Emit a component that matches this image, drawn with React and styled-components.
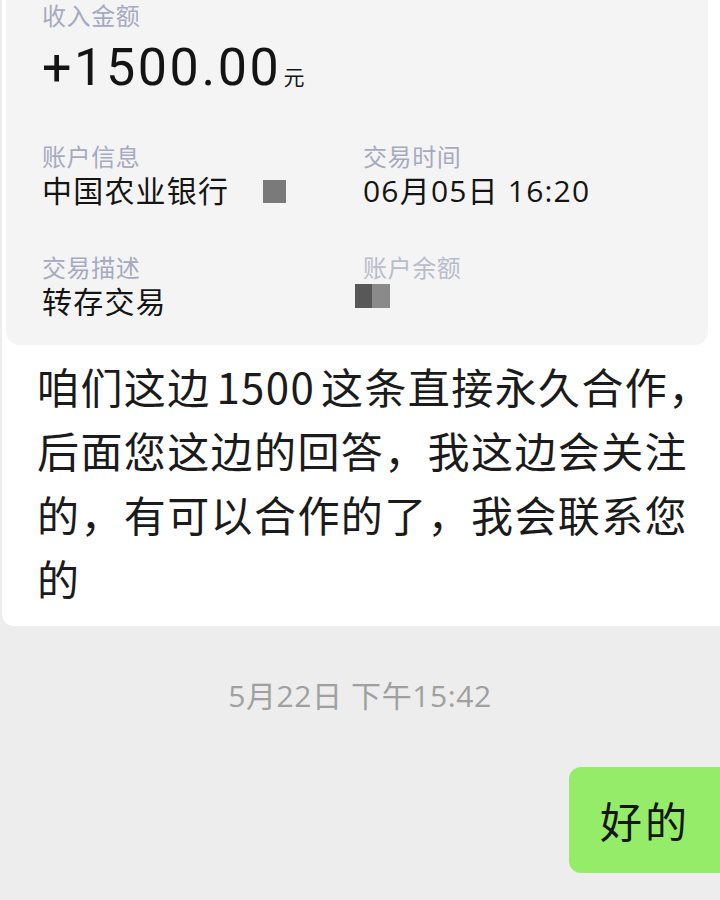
import React from "react";
import styled, { createGlobalStyle } from "styled-components";

const Global = createGlobalStyle`
  html, body { margin: 0; padding: 0; background: #ededed; }
  body { font-family: "Noto Sans CJK SC", "Noto Sans", sans-serif; }
`;

const Page = styled.div`
  width: 720px;
  height: 900px;
  overflow: hidden;
  display: flex;
  flex-direction: column;
  background: #ededed;
`;

const Bubble = styled.div`
  background: #ffffff;
  margin-left: 2px;
  border-radius: 0 0 0 12px;
  padding-bottom: 16px;
  display: flex;
  flex-direction: column;
`;

const Card = styled.div`
  background: #f4f4f4;
  margin: 0 12px 0 4px;
  border-radius: 0 0 14px 14px;
  padding: 0 0 25px 36px;
  display: flex;
  flex-direction: column;
`;

const Label = styled.div`
  font-size: 24px;
  line-height: 30px;
  letter-spacing: 0.6px;
  color: ${(p) => (p.$faint ? "#b9bccb" : "#a6aac0")};
  white-space: nowrap;
`;

const Amount = styled.div`
  margin-top: 7px;
  font-family: Roboto, "Noto Sans", sans-serif;
  font-size: 52px;
  line-height: 62px;
  font-weight: 400;
  letter-spacing: 2.6px;
  color: #141414;
  display: flex;
  align-items: baseline;
`;

const Unit = styled.span`
  font-family: "Noto Sans CJK SC", sans-serif;
  font-size: 21px;
  font-weight: 400;
  margin-left: 2px;
  letter-spacing: 0;
`;

const InfoGrid = styled.div`
  margin-top: 34px;
  display: grid;
  grid-template-columns: 321px 1fr;
  row-gap: 43px;
`;

const Field = styled.div`
  display: flex;
  flex-direction: column;
  gap: 2px;
`;

const Value = styled.div`
  font-family: "Open Sans", "Noto Sans CJK SC", sans-serif;
  font-size: 30px;
  line-height: 36px;
  letter-spacing: 1.2px;
  color: #141414;
  white-space: nowrap;
  display: flex;
  align-items: center;
`;

const Mosaic = styled.span`
  display: inline-block;
  width: ${(p) => p.$w}px;
  height: ${(p) => p.$h}px;
  background: ${(p) => p.$c};
  margin-left: ${(p) => p.$ml || 0}px;
`;

const Message = styled.div`
  padding: 9px 0 0 35px;
  font-size: 42px;
  line-height: 64px;
  letter-spacing: 1.4px;
  word-spacing: -5px;
  font-weight: 400;
  color: #1b1b1b;
  white-space: pre;
`;

const Time = styled.div`
  margin-top: 50px;
  text-align: center;
  font-family: "Open Sans", "Noto Sans CJK SC", sans-serif;
  font-size: 30px;
  line-height: 40px;
  letter-spacing: 0.6px;
  color: #a0a0a0;
`;

const Row = styled.div`
  margin-top: 51px;
  display: flex;
  justify-content: flex-end;
`;

const GreenBubble = styled.div`
  background: #95ec69;
  border-radius: 12px 0 0 12px;
  padding: 32px 30px 32px 31px;
  font-size: 42px;
  line-height: 42px;
  letter-spacing: 3px;
  color: #161616;
`;

export default function App() {
  return (
    <Page>
      <Global />
      <Bubble>
        <Card>
          <Label>收入金额</Label>
          <Amount>
            +1500.00<Unit>元</Unit>
          </Amount>
          <InfoGrid>
            <Field>
              <Label>账户信息</Label>
              <Value>
                中国农业银行
                <Mosaic $w={23} $h={23} $c="#7a7a7a" $ml={34} />
              </Value>
            </Field>
            <Field>
              <Label>交易时间</Label>
              <Value>06月05日 16:20</Value>
            </Field>
            <Field>
              <Label>交易描述</Label>
              <Value>转存交易</Value>
            </Field>
            <Field>
              <Label $faint>账户余额</Label>
              <Value>
                <Mosaic $w={17} $h={24} $c="#585858" $ml={-8} />
                <Mosaic $w={18} $h={24} $c="#8a8a8a" />
              </Value>
            </Field>
          </InfoGrid>
        </Card>
        <Message>
          {"咱们这边 1500 这条直接永久合作，\n后面您这边的回答，我这边会关注\n的，有可以合作的了，我会联系您\n的"}
        </Message>
      </Bubble>
      <Time>5月22日 下午15:42</Time>
      <Row>
        <GreenBubble>好的</GreenBubble>
      </Row>
    </Page>
  );
}
